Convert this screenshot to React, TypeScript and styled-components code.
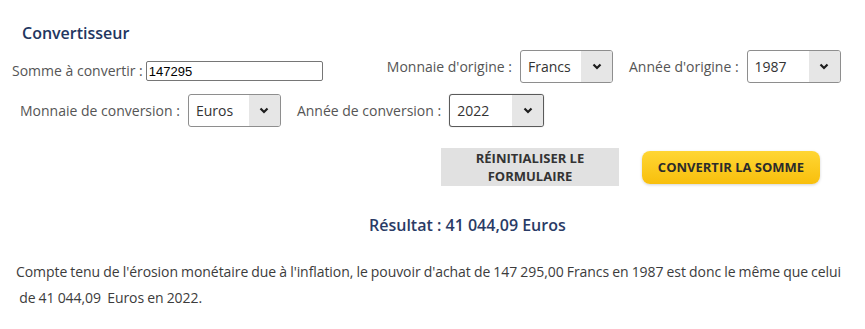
import React from 'react'
import styled, { createGlobalStyle } from 'styled-components'

const GlobalStyle = createGlobalStyle`
  body {
    margin: 0;
    background: #fff;
    font-family: 'Open Sans', 'Noto Sans', sans-serif;
  }
`

const Page = styled.div`
  width: 865px;
  height: 329px;
  padding-top: 22px;
  box-sizing: border-box;
  overflow: hidden;
`

const Title = styled.h2`
  margin: 0 0 6px 22px;
  font-size: 16px;
  line-height: 22px;
  font-weight: 600;
  color: #22365f;
`

const Row = styled.div<{ indent: number; top?: number }>`
  display: flex;
  align-items: center;
  padding-left: ${({ indent }) => indent}px;
  margin-top: ${({ top }) => top || 0}px;
`

const Field = styled.div<{ space: number; lead?: number; drop?: number }>`
  display: flex;
  align-items: center;
  gap: ${({ space }) => space}px;
  margin-left: ${({ lead }) => lead || 0}px;
  align-self: ${({ drop }) => (drop ? 'flex-start' : 'center')};
  margin-top: ${({ drop }) => drop || 0}px;
`

const Label = styled.label`
  font-size: 14px;
  line-height: 20px;
  color: #555;
  white-space: nowrap;
`

const TextInput = styled.input`
  box-sizing: border-box;
  width: 177px;
  height: 20px;
  padding: 0 2px;
  border: 1px solid #767676;
  border-radius: 2px;
  font-family: 'Liberation Sans', Arial, sans-serif;
  font-size: 13px;
  color: #000;
  outline: none;
`

const SelectBox = styled.div<{ width: number; focused?: boolean }>`
  box-sizing: border-box;
  display: flex;
  width: ${({ width }) => width}px;
  height: 33px;
  border: 1px solid ${({ focused }) => (focused ? '#5a5a5a' : '#8e8e8e')};
  border-radius: 3px;
  background: #fff;
  overflow: hidden;
  box-shadow: ${({ focused }) => (focused ? '0 0 1px rgba(0,0,0,0.4)' : 'none')};
`

const SelectValue = styled.span`
  flex: 1;
  padding-left: 7px;
  font-size: 14px;
  line-height: 31px;
  color: #333;
`

const SelectArrow = styled.span`
  width: 31px;
  display: flex;
  align-items: center;
  justify-content: center;
  background: #e6e6e6;
`

const ButtonRow = styled.div`
  display: flex;
  align-items: center;
  gap: 23px;
  margin: 21px 0 0 441px;
`

const ResetButton = styled.button`
  width: 178px;
  height: 38px;
  border: none;
  border-radius: 0;
  background: #e1e1e1;
  font-family: 'Open Sans', sans-serif;
  font-size: 13px;
  font-weight: 700;
  line-height: 18px;
  color: #333;
  padding: 0 24px;
`

const ConvertButton = styled.button`
  width: 178px;
  height: 33px;
  border: none;
  border-radius: 8px;
  background: linear-gradient(#ffd634, #f8bf0c);
  box-shadow: 0 1px 3px rgba(0, 0, 0, 0.18);
  font-family: 'Open Sans', sans-serif;
  font-size: 13px;
  font-weight: 700;
  color: #2b2b2b;
  padding: 0;
`

const Result = styled.div`
  margin: 28px 0 0 369px;
  font-size: 16px;
  line-height: 22px;
  font-weight: 600;
  color: #2a3b66;
`

const Explanation = styled.p`
  margin: 23px 0 0 16px;
  width: 845px;
  font-size: 14px;
  line-height: 26px;
  letter-spacing: -0.07px;
  word-spacing: -0.4px;
  color: #3c3c3c;
  white-space: nowrap;
`

function Chevron() {
  return (
    <svg width="10" height="7" viewBox="0 0 10 7">
      <path d="M1.5 1.5 L5 5 L8.5 1.5" fill="none" stroke="#1e1e1e" strokeWidth="2.2" />
    </svg>
  )
}

function Select({ value, width = 93, focused }: { value: string; width?: number; focused?: boolean }) {
  return (
    <SelectBox width={width} focused={focused}>
      <SelectValue>{value}</SelectValue>
      <SelectArrow>
        <Chevron />
      </SelectArrow>
    </SelectBox>
  )
}

export default function App() {
  return (
    <Page>
      <GlobalStyle />
      <Title>Convertisseur</Title>
      <Row indent={12}>
        <Field space={3} drop={11}>
          <Label>Somme à convertir :</Label>
          <TextInput defaultValue="147295" />
        </Field>
        <Field space={8} lead={64}>
          <Label>Monnaie d'origine :</Label>
          <Select value="Francs" />
        </Field>
        <Field space={8} lead={16}>
          <Label>Année d'origine :</Label>
          <Select value="1987" width={94} />
        </Field>
      </Row>
      <Row indent={20} top={11}>
        <Field space={8}>
          <Label>Monnaie de conversion :</Label>
          <Select value="Euros" />
        </Field>
        <Field space={8} lead={16}>
          <Label>Année de conversion :</Label>
          <Select value="2022" width={95} focused />
        </Field>
      </Row>
      <ButtonRow>
        <ResetButton>RÉINITIALISER LE FORMULAIRE</ResetButton>
        <ConvertButton>CONVERTIR LA SOMME</ConvertButton>
      </ButtonRow>
      <Result>Résultat : 41 044,09 Euros</Result>
      <Explanation>
        Compte tenu de l'érosion monétaire due à l'inflation, le pouvoir d'achat de 147 295,00 Francs en 1987 est donc
        le même que celui
        <br />
        &nbsp;de 41 044,09&nbsp; Euros en 2022.
      </Explanation>
    </Page>
  )
}
